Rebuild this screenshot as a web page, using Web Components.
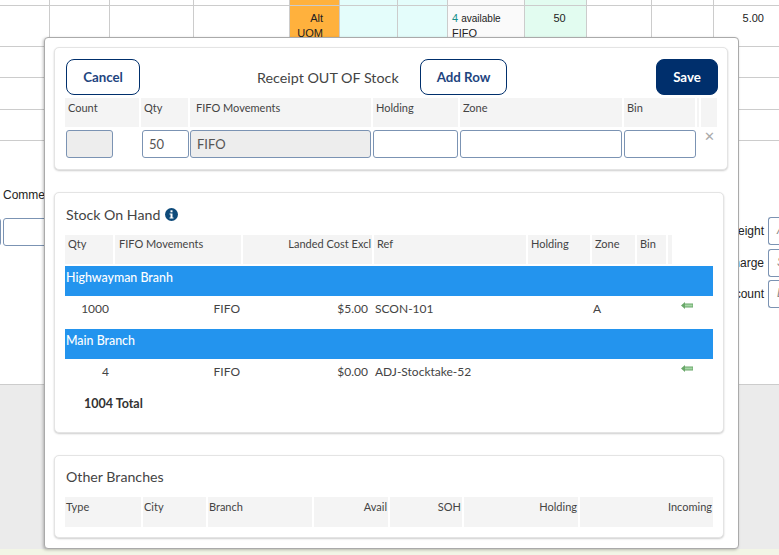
<!DOCTYPE html>
<html><head><meta charset="utf-8">
<style>
html,body{margin:0;padding:0;width:779px;height:555px;overflow:hidden;background:#fff;font-family:Lato,"Liberation Sans",sans-serif}
</style></head><body>
<bg-page></bg-page>
<stock-modal></stock-modal>
<script>
const FONT='Lato,"Liberation Sans",sans-serif';
const BGF='"Liberation Sans",Arial,sans-serif';
class BgPage extends HTMLElement{
 constructor(){super();const s=this.attachShadow({mode:'open'});
 const cols=[50,60,84,96,50,58,50,77,62,65,62,65];
 const rows=[6,41,31,32,31];
 let cells='';
 rows.forEach((h,r)=>{cols.forEach((c,i)=>{
   let cls='c',txt='';
   if(r<2&&i==4)cls+=' o';
   if(r<2&&(i==5||i==6))cls+=' cy';
   if(r<2&&i==7)cls+=' g';
   if(r<2&&i==8)cls+=' m';
   if(r==1){
     if(i==4)txt='<div class="alt">Alt<br>UOM</div>';
     if(i==7)txt='<div class="av"><b>4</b> <small>available</small><br>FIFO</div>';
     if(i==8)txt='<div class="ctr">50</div>';
     if(i==11)txt='<div class="rt">5.00</div>';
   }
   cells+=`<div class="${cls}">${txt}</div>`;
 })});
 s.innerHTML=`<style>
 :host{display:block;width:779px;height:555px;position:relative;overflow:hidden;font:11px ${BGF};color:#222}
 .grid{display:grid;grid-template-columns:${cols.map(c=>c+'px').join(' ')};grid-template-rows:${rows.map(h=>h+'px').join(' ')};width:779px}
 .c{border-right:1px solid #ccc;border-bottom:1px solid #ccc;box-sizing:border-box;overflow:hidden}
 .c:nth-child(12n){border-right:0}
 .o{background:#ffb13d}.cy{background:#e4fdfb}.g{background:#fafafa}.m{background:#e2fcf0}
 .alt{text-align:right;padding:5px 16px 0 0;line-height:15px}
 .av{padding:5px 0 0 4px;line-height:15px;white-space:nowrap}.av b{font-weight:400;color:#16908a}.av small{font-size:10px}
 .ctr{text-align:center;padding:5px 0 0 8px;line-height:15px}
 .rt{text-align:right;padding:5px 15px 0 0;line-height:15px}
 .form{height:244px;display:flex;justify-content:space-between;box-sizing:border-box;border-bottom:1px solid #ccc}
 .left{padding:47px 0 0 3px;font-size:12px;line-height:15px}
 .left .pair{margin:15px 0 0 -12px;display:flex;gap:2px}
 .inp{box-sizing:border-box;border:1px solid #7b93b3;border-radius:3px;background:#fff;flex:none}
 .left .inp{width:10px;height:28px}
 .left .inp + .inp{width:60px}
 .right{width:110px;padding-top:76px;display:flex;flex-direction:column;gap:3.5px;font-size:12px}
 .row{display:flex;justify-content:flex-end;align-items:center;gap:4px;height:28px;white-space:nowrap}
 .row .inp{width:2px;font:italic 12px ${BGF};color:#888;padding:5px 0 0 8px;border-right:0;border-radius:3px 0 0 3px;box-sizing:content-box;height:21px}
 .grey{height:164px;background:#ebebeb}
 .foot{height:6px;background:#f2f5e6}
 </style><div class="grid">${cells}</div>
 <div class="form"><div class="left">Comments<div class="pair"><div class="inp"></div><div class="inp"></div></div></div>
 <div class="right"><div class="row">Weight<div class="inp">A</div></div><div class="row">Charge<div class="inp">S</div></div><div class="row">Discount<div class="inp">D</div></div></div></div>
 <div class="grey"></div><div class="foot"></div>`;
 }}
customElements.define('bg-page',BgPage);

class ModalCard extends HTMLElement{
 constructor(){super();this.attachShadow({mode:'open'}).innerHTML=`<style>
 :host{display:block;box-sizing:border-box;background:#fff;border:1px solid #e4e4e4;border-radius:5px;box-shadow:0 1px 2px rgba(0,0,0,.2);flex:none}
 </style><slot></slot>`;}}
customElements.define('modal-card',ModalCard);

class UiBtn extends HTMLElement{
 constructor(){super();this.attachShadow({mode:'open'}).innerHTML=`<style>
 :host{display:flex;align-items:center;justify-content:center;box-sizing:border-box;height:36px;border:1px solid #002f6c;border-radius:8px;color:#1e4580;font:700 13.3px ${FONT};background:#fff;flex:none}
 :host([primary]){background:#002f6c;color:#fff}
 </style><slot></slot>`;}}
customElements.define('ui-btn',UiBtn);

class HeadRow extends HTMLElement{
 constructor(){super();const s=this.attachShadow({mode:'open'});
 const cols=JSON.parse(this.getAttribute('cols'));
 const h=this.getAttribute('h')||29;
 const pt=this.getAttribute('pt')||3;
 s.innerHTML=`<style>
 :host{display:flex;gap:2px;font:11px ${FONT};color:#444}
 div{background:#f4f4f4;height:${h}px;box-sizing:border-box;padding:${pt}px 3px 0 3px;line-height:14px;white-space:nowrap;overflow:hidden;flex:none}
 .r{text-align:right;padding-right:1px}
 </style>`+cols.map(c=>`<div class="${c[2]||''}" style="width:${c[1]}px;${c[3]||''}">${c[0]}</div>`).join('');
 }}
customElements.define('head-row',HeadRow);

class StockModal extends HTMLElement{
 constructor(){super();const s=this.attachShadow({mode:'open'});
 const arrow=`<svg width="12" height="7" viewBox="0 0 12 7"><path d="M0 3.5 L4 0 V1.5 H12 V5.5 H4 V7 Z" fill="#6aa86a"/><path d="M4 2.5H11.5V4.5H4Z" fill="#a5d6a5"/></svg>`;
 const row=(q,r)=>`<div class="dr"><span style="width:44px;text-align:right">${q}</span><span style="width:129px;text-align:right">FIFO</span><span style="width:126px;text-align:right">${r[0]}</span><span style="width:221px;padding-left:5px;box-sizing:border-box">${r[1]}</span><span style="width:20px">${r[2]}</span><span class="ar">${arrow}</span></div>`;
 s.innerHTML=`<style>
 :host{position:absolute;left:44px;top:37px;width:695px;height:512px;box-sizing:border-box;background:#fff;border:1px solid #aaa;border-radius:4px;box-shadow:-1px 1px 3px rgba(0,0,0,.25);padding:9px 10px 0 9px;display:flex;flex-direction:column;font:12px ${FONT};color:#444}
 .c1{height:123px;padding:11px 9px 0 11px}
 .top{display:flex;align-items:center;height:36px}
 .title{font-size:14.3px;color:#444;margin:0 21px 0 117px;width:142px;white-space:nowrap}
 .inputs{display:flex;margin-top:3px;align-items:flex-start}
 .in{box-sizing:border-box;height:28px;border:1px solid #7b93b3;border-radius:3px;background:#fff;font:13px ${FONT};color:#555;padding:5px 6px;flex:none}
 .dis{background:#ededed}
 .x{color:#aaa;font:13px "DejaVu Sans",sans-serif;line-height:12px;margin-left:8px;margin-top:1px}
 .c2{width:670px;height:241px;margin-top:22px;padding:0 10px}
 h3{margin:0;font:400 14.2px ${FONT};color:#444;display:flex;align-items:center;gap:5px;padding-left:1px;box-sizing:border-box}
 .c2 h3{height:42px}
 .bar{background:#2394ee;color:#fff;height:30px;font:500 12.4px ${FONT};box-sizing:border-box;padding:5px 1px;line-height:14px;width:648px}
 .dr{display:flex;height:33px;align-items:center;font-size:12px;color:#444;gap:2px;width:648px;position:relative;padding-bottom:9px;box-sizing:border-box}
 .ar{position:absolute;left:616px;top:6px;line-height:0}
 .tot{font-weight:700;font-size:12.5px;color:#333;padding-left:19px;line-height:14px;margin-top:5px}
 .c3{width:670px;height:83px;margin-top:22px;padding:0 10px}
 .c3 h3{height:41px}
 </style>
 <modal-card class="c1">
   <div class="top"><ui-btn style="width:74px">Cancel</ui-btn><span class="title">Receipt OUT OF Stock</span><ui-btn style="width:87px">Add Row</ui-btn><span style="flex:1"></span><ui-btn primary style="width:62px">Save</ui-btn></div>
   <head-row style="margin-top:3px;margin-left:-1px" cols='[["Count",74],["Qty",47],["FIFO Movements",181,"","padding-left:6px"],["Holding",85],["Zone",162],["Bin",71],["",2,"","padding:0"],["",16,"","padding:0"]]'></head-row>
   <div class="inputs"><div class="in dis" style="width:47px;margin-right:29px"></div><div class="in" style="width:47px;margin-right:1px">50</div><div class="in dis" style="width:181px;margin-right:2px">FIFO</div><div class="in" style="width:85px;margin-right:2px"></div><div class="in" style="width:162px;margin-right:2px"></div><div class="in" style="width:72px"></div><span class="x">✕</span></div>
 </modal-card>
 <modal-card class="c2">
   <h3>Stock On Hand <svg width="13" height="13" viewBox="0 0 13 13"><circle cx="6.5" cy="6.5" r="6.5" fill="#0d4a7a"/><rect x="5.5" y="2.3" width="2" height="2" fill="#fff"/><path d="M4.5 5.4H7.5V9.6H8.5V10.6H4.5V9.6H5.5V6.4H4.5Z" fill="#fff"/></svg></h3>
   <head-row pt="2" cols='[["Qty",48],["FIFO Movements",126,"","padding-left:4px"],["Landed Cost Excl",129,"r"],["Ref",152],["Holding",62],["Zone",43],["Bin",29],["",4,"","padding:0"]]'></head-row>
   <div class="bar" style="margin-top:2px">Highwayman Branh</div>
   ${row('1000',['$5.00','SCON-101','A'])}
   <div class="bar">Main Branch</div>
   ${row('4',['$0.00','ADJ-Stocktake-52',''])}
   <div class="tot">1004 Total</div>
 </modal-card>
 <modal-card class="c3">
   <h3>Other Branches</h3>
   <head-row h="30" pt="3" cols='[["Type",76,"","padding-left:1px"],["City",63,"","padding-left:1px"],["Branch",104,"","padding-left:1px"],["Avail",74,"r"],["SOH",72,"r"],["Holding",114,"r"],["Incoming",133,"r"]]'></head-row>
 </modal-card>`;
 }}
customElements.define('stock-modal',StockModal);
</script>
</body></html>
